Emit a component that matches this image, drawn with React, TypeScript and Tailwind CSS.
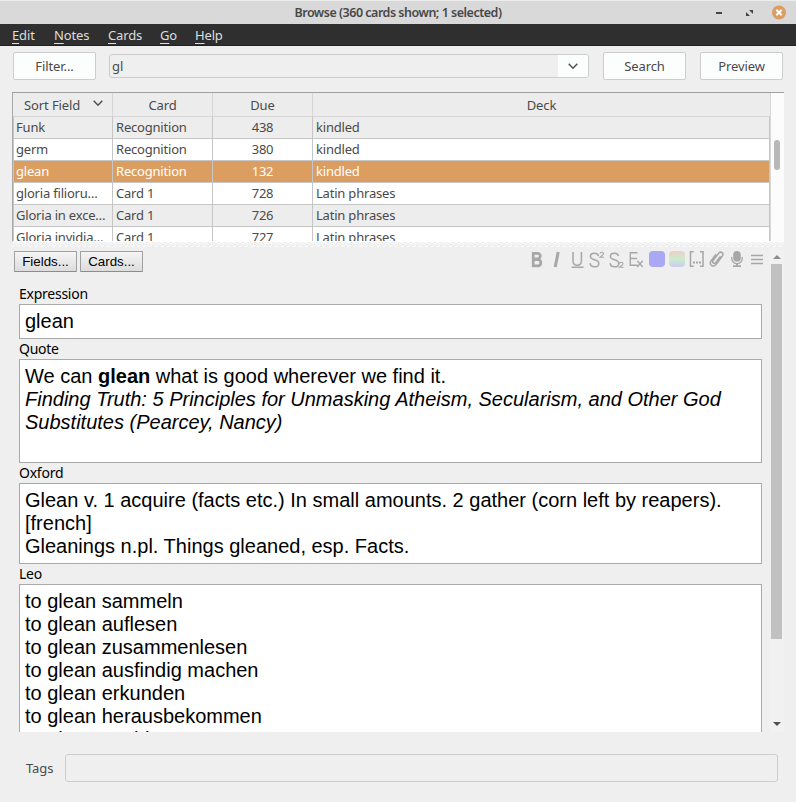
import type { ReactNode } from "react";

const rows = [
  { field: "Funk", card: "Recognition", due: "438", deck: "kindled", tone: "bg-[#ededed]" },
  { field: "germ", card: "Recognition", due: "380", deck: "kindled", tone: "bg-white" },
  { field: "glean", card: "Recognition", due: "132", deck: "kindled", tone: "bg-[#dc9d61] text-white" },
  { field: "gloria filioru…", card: "Card 1", due: "728", deck: "Latin phrases", tone: "bg-white" },
  { field: "Gloria in exce…", card: "Card 1", due: "726", deck: "Latin phrases", tone: "bg-[#ededed]" },
  { field: "Gloria invidia…", card: "Card 1", due: "727", deck: "Latin phrases", tone: "bg-white" },
];

const menus = [
  { name: "Edit", width: "w-[42px]" },
  { name: "Notes", width: "w-[54px]" },
  { name: "Cards", width: "w-[52px]" },
  { name: "Go", width: "w-[35px]" },
  { name: "Help", width: "w-[40px]" },
];

function PushButton({ children }: { children: ReactNode }) {
  return (
    <button className="h-7 w-[83px] rounded-[2px] border border-[#cdcdcd] bg-[#fcfdfd] text-[13px] leading-[26px] tracking-[-0.1px]">
      {children}
    </button>
  );
}

function SmallButton({ children }: { children: ReactNode }) {
  return (
    <button className="h-[21px] w-[63px] rounded-[1px] border border-[#a0a0a0] border-b-[#8c8c8c] bg-linear-to-b from-[#f5f5f5] to-[#dddddd] font-['Liberation_Sans',sans-serif] text-[13.33px] leading-[19px] text-black">
      {children}
    </button>
  );
}

function Chevron() {
  return (
    <svg width="10" height="7" viewBox="0 0 10 7" fill="none" stroke="#505050" strokeWidth="1.5">
      <path d="M.7 .8 5 5.2 9.300 .8" />
    </svg>
  );
}

function Field({ label, children, height }: { label: string; children?: ReactNode; height: string }) {
  return (
    <div className="shrink-0">
      <div className="h-5 text-[14px] leading-[20px] tracking-[-0.25px] text-black">{label}</div>
      <div
        className={`${height} border border-[#a9a9a9] bg-white p-[5px] font-['Liberation_Sans',sans-serif] text-[20px] leading-[23px] text-black`}
      >
        {children}
      </div>
    </div>
  );
}

function EditorIcons() {
  const s = "M9 3.600C8.500 1.700 7 .8 4.900.8 2.500.8.900 2 .9 4 .9 8.300 9.300 6.200 9.300 10.900 9.300 13 7.600 14.300 5.100 14.300 2.500 14.300.8 13 .6 10.600";
  const two = "M.5 2Q.6.600 2.300.600T4 2.100Q4 3.100.6 5.500H4.500";
  return (
    <svg className="shrink-0" width="236" height="20" viewBox="0 0 236 20" fill="none" stroke="#a7a7a7" strokeWidth="1.3">
      <defs>
        <linearGradient id="palette" x1="0" y1="0" x2="0" y2="1">
          <stop offset="0" stopColor="#f0cccc" />
          <stop offset=".5" stopColor="#cceccc" />
          <stop offset="1" stopColor="#ccccf2" />
        </linearGradient>
      </defs>
      <path d="M4.200 2.300H8.500a2.800 2.800 0 0 1 0 5.600H4.200ZM4.200 8.600H9.200a3.200 3.200 0 0 1 0 6.300H4.200Z" strokeWidth="2.700" />
      <path d="M29.200 1 26.200 16" strokeWidth="3" />
      <path d="M44 1v9q0 4.200 4.200 4.200t4.200-4.200V1M42.500 16.200h12" strokeWidth="1.500" />
      <g transform="translate(60.500 1.500)">
        <path d={s} strokeWidth="1.500" />
        <path d={two} transform="translate(10 -.8)" strokeWidth="1.100" />
      </g>
      <g transform="translate(80.500 1.500)">
        <path d={s} strokeWidth="1.500" />
        <path d={two} transform="translate(9.500 9.200)" strokeWidth="1.100" />
      </g>
      <path d="M108.500 1.700h-7.200v12.600h7.500M101.500 7.500h6.500" strokeWidth="1.400" />
      <path d="m108.300 9.800 5.400 6.200m0-6.200-5.400 6.200" />
      <rect x="120" y="0" width="16" height="16" rx="4" fill="#a8a8f5" stroke="none" />
      <rect x="140" y="0" width="16" height="16" rx="4" fill="url(#palette)" stroke="none" />
      <path d="M164.700 .8H161.500v14.400h3.200M171 .8h3v14.400h-3" strokeWidth="1.500" />
      <path d="M164 11.500h8" strokeWidth="2" strokeDasharray="2 1" />
      <path d="M191.500 5.200 186.800 11.500Q185.300 13 184.200 12T184.300 9.300L189.700 2.300Q191.400.300 193.100 1.700 194.700 3 193.200 5.200L186.800 13.700Q184.600 16 182.400 14.300 180.300 12.500 182.200 9.800L187 3.300" strokeWidth="1.500" />
      <rect x="204.200" y="0" width="7.600" height="10.800" rx="3.800" fill="#a7a7a7" stroke="none" />
      <path d="M202.800 6v1.500a5.200 5.200 0 0 0 10.400 0V6" strokeWidth="1.300" />
      <path d="M208 12.500v3M204 15.200h8" strokeWidth="1.800" />
      <path d="M222 4.500h12M222 8.500h12M222 12.500h12" strokeWidth="1.300" />
    </svg>
  );
}

export default function App() {
  return (
    <div className="flex h-[802px] w-[796px] flex-col overflow-hidden bg-[#efefef] font-['Noto_Sans','Open_Sans',sans-serif] text-[13px] text-[#4a4a4a]">
      <header className="flex h-6 shrink-0 items-center border-t border-[#ededed] bg-[#d9d9d9]">
        <div className="w-[177px]" />
        <h1 className="flex-1 pt-px text-center text-[12.500px] font-semibold tracking-[-0.49px] text-[#484848]">
          Browse (360 cards shown; 1 selected)
        </h1>
        <svg className="ml-[66px] shrink-0" width="111" height="22" viewBox="0 0 111 22">
          <path d="M31 11h6" stroke="#444" strokeWidth="2" />
          <path d="M64 8h4v4ZM61 10v4h4Z" fill="#444" />
          <circle cx="94" cy="10.500" r="7" fill="#dc9d61" />
          <path d="m91.300 7.800 5.400 5.400m0-5.400-5.400 5.400" stroke="white" strokeWidth="2" />
        </svg>
      </header>
      <nav className="flex h-[22px] shrink-0 border-b border-[#222] bg-[#2f2f2f] pl-3 leading-[23px] tracking-[-0.15px] text-[#dedede]">
        {menus.map((m) => (
          <span key={m.name} className={m.width}>
            <span className="underline underline-offset-[3px]">{m.name[0]}</span>
            {m.name.slice(1)}
          </span>
        ))}
      </nav>
      <div className="flex h-[46px] shrink-0 items-start pl-[13px] pt-[6px]">
        <PushButton>Filter...</PushButton>
        <div className="ml-[13px] mr-[14px] mt-[2px] flex h-6 w-[480px] overflow-hidden rounded-[3px] border border-[#cdcdcd]">
          <span className="flex-1 pl-[2px] leading-[23px]">gl</span>
          <span className="flex w-[30px] items-center justify-center bg-[#fcfdfd]">
            <Chevron />
          </span>
        </div>
        <PushButton>Search</PushButton>
        <div className="w-[14px]" />
        <PushButton>Preview</PushButton>
      </div>

      <section className="ml-3 flex h-[150px] w-[772px] shrink-0 overflow-hidden border-b border-l border-t border-b-white border-l-[#a8a8a8] border-t-[#a0a0a0]">
        <div className="w-[758px] overflow-hidden border-r border-[#d8d8d8]">
          <div className="grid h-6 grid-cols-[100px_100px_100px_457px] border-b border-[#d6d6d6] bg-[#ececec] text-center leading-[24px] tracking-[-0.1px]">
            <div className="flex items-start border-r border-[#d6d6d6] pl-[11px]">
              Sort Field
              <span className="ml-auto mr-[9px] mt-[7px]">
                <Chevron />
              </span>
            </div>
            <div className="border-r border-[#d6d6d6]">Card</div>
            <div className="border-r border-[#d6d6d6]">Due</div>
            <div>Deck</div>
          </div>
          {rows.map((r) => (
            <div
              key={r.field}
              className={`grid h-[22px] grid-cols-[100px_100px_100px_457px] border-b border-[#c6c6c6] leading-[21px] tracking-[-0.2px] whitespace-nowrap ${r.tone}`}
            >
              <div className="border-l border-r border-[#c6c6c6] pl-[2px]">{r.field}</div>
              <div className="border-r border-[#c6c6c6] pl-[3px]">{r.card}</div>
              <div className="border-r border-[#c6c6c6] text-center">{r.due}</div>
              <div className="border-r border-[#c6c6c6] pl-[3px]">{r.deck}</div>
            </div>
          ))}
        </div>
        <div className="flex-1 bg-[#fcfcfc] pl-[3px] pt-[47px]">
          <div className="h-[30px] w-[6px] rounded-full bg-[#b8b8b8]" />
        </div>
      </section>

      <svg className="ml-3 block shrink-0" width="772" height="5">
        <defs>
          <pattern id="grip" width="6" height="4" patternUnits="userSpaceOnUse">
            <path d="M0 0h1v1h1v1h-1v-1h-1ZM3 1h1v1h1v1h-1v-1h-1ZM1 3h1v1h-1ZM5 0h1v1h-1Z" fill="white" />
          </pattern>
        </defs>
        <rect width="772" height="5" fill="url(#grip)" />
      </svg>

      <main className="flex h-[485px] shrink-0 overflow-hidden">
        <div className="w-[770px]">
          <div className="flex h-[37px] pl-[14px] pt-1">
            <div className="flex gap-[3px]">
              <SmallButton>Fields...</SmallButton>
              <SmallButton>Cards...</SmallButton>
            </div>
            <div className="ml-[386px]">
              <EditorIcons />
            </div>
          </div>
          <div className="ml-[19px] flex w-[743px] flex-col">
            <Field label="Expression" height="h-[35px]">
              glean
            </Field>
            <Field label="Quote" height="h-[104px]">
              We can <b>glean</b> what is good wherever we find it.
              <br />
              <i>Finding Truth: 5 Principles for Unmasking Atheism, Secularism, and Other God Substitutes (Pearcey, Nancy)</i>
            </Field>
            <Field label="Oxford" height="h-[81px]">
              Glean v. 1 acquire (facts etc.) In small amounts. 2 gather (corn left by reapers). [french]
              <br />
              Gleanings n.pl. Things gleaned, esp. Facts.
            </Field>
            <Field label="Leo" height="h-[250px]">
              <div>to glean sammeln</div>
              <div>to glean auflesen</div>
              <div>to glean zusammenlesen</div>
              <div>to glean ausfindig machen</div>
              <div>to glean erkunden</div>
              <div>to glean herausbekommen</div>
              <div>to glean nachlesen</div>
            </Field>
          </div>
        </div>
        <div className="flex w-[14px] flex-col items-center bg-[#f1f1f1] pt-2">
          <svg width="8" height="4" viewBox="0 0 8 4">
            <path d="M4 0 8 4H0Z" fill="#8c8c8c" />
          </svg>
          <div className="mr-px mt-[5px] h-[375px] w-[11px] bg-[#c1c1c1]" />
          <svg className="mt-[83px]" width="8" height="4" viewBox="0 0 8 4">
            <path d="M0 0H8L4 4Z" fill="#505050" />
          </svg>
        </div>
      </main>

      <footer className="flex pl-[26px] pt-[22px]">
        <label className="w-[39px] leading-[29px] tracking-[-0.1px]">Tags</label>
        <div className="h-7 w-[713px] rounded-[3px] border border-[#cdcdcd]" />
      </footer>
    </div>
  );
}
